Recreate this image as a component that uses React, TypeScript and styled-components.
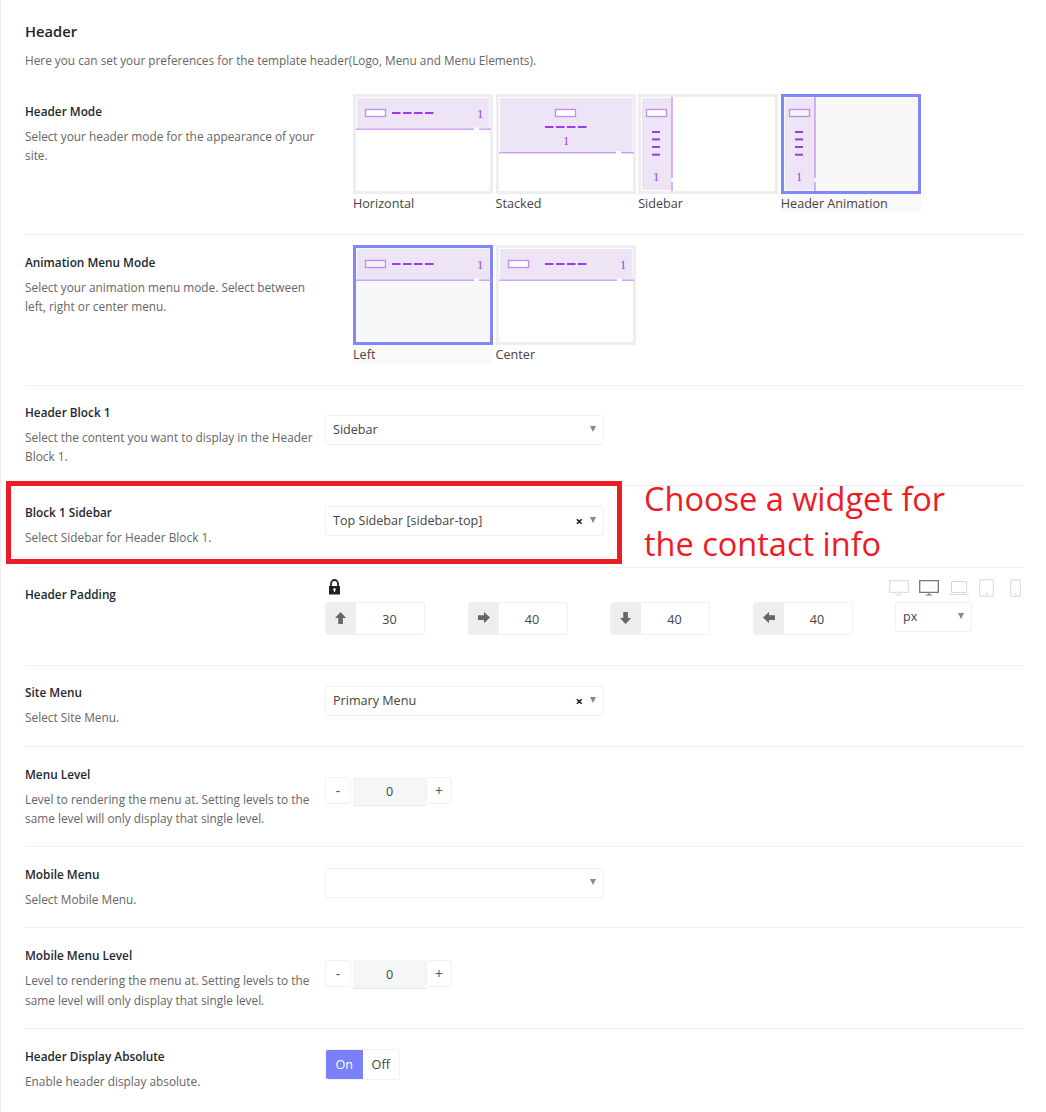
import React from 'react';
import styled, { createGlobalStyle } from 'styled-components';

const GlobalStyle = createGlobalStyle`
    html, body { margin: 0; padding: 0; background: #fff; }
    body { font-family: "Open Sans", "Noto Sans", "Liberation Sans", sans-serif; color: #23282d; }
`;

const Page = styled.div`
    position: relative;
    width: 1046px;
    height: 1112px;
    box-sizing: border-box;
    border-left: 1px solid #ebebeb;
    padding-left: 24px;
    overflow: hidden;
`;
const Intro = styled.div`
    height: 84px;
    box-sizing: border-box;
    padding-top: 22px;
`;
const Title = styled.h2`
    margin: 0;
    font-size: 14.7px;
    line-height: 18px;
    font-weight: 600;
    color: #1f2328;
`;
const Lead = styled.p`
    margin: 11px 0 0;
    font-size: 11.8px;
    line-height: 19px;
    color: #666;
`;
const Row = styled.div<{ $last?: boolean }>`
    width: 999px;
    display: grid;
    grid-template-columns: 300px 1fr;
    border-bottom: ${p => (p.$last ? 'none' : '1px solid #f0f0f0')};
`;
const Label = styled.div<{ $top?: number }>`
    padding: ${p => p.$top ?? 19}px 10px ${p => 38 - (p.$top ?? 19)}px 0;
`;
const Name = styled.div`
    font-size: 11.8px;
    line-height: 14px;
    font-weight: 600;
    color: #23282d;
    margin-bottom: 9px;
`;
const Desc = styled.div`
    font-size: 11.85px;
    line-height: 19.2px;
    color: #666;
`;
const Control = styled.div<{ $top: number; $left?: number }>`
    padding-top: ${p => p.$top}px;
    padding-left: ${p => p.$left ?? 0}px;
`;

const Thumbs = styled.div`
    display: flex;
    gap: 2.6px;
    padding-bottom: 21px;
`;
const ThumbItem = styled.div`
    width: 140px;
`;
const ThumbBox = styled.div<{ $active?: boolean }>`
    width: 140px;
    height: 100px;
    box-sizing: border-box;
    border: 3px solid ${p => (p.$active ? '#7f87fb' : '#eeeeee')};
    background: ${p => (p.$active ? '#f8f8f8' : '#fff')};
    svg { display: block; margin: -3px; }
`;
const ThumbName = styled.div<{ $active?: boolean }>`
    font-size: 12.6px;
    line-height: 19px;
    color: #444;
    background: ${p => (p.$active ? '#f9f9f9' : 'transparent')};
`;

const SelectBox = styled.div<{ $w?: number }>`
    position: relative;
    width: ${p => p.$w ?? 279}px;
    height: 30px;
    box-sizing: border-box;
    border: 1px solid #f1f1f1;
    border-radius: 3px;
    background: #fff;
    display: flex;
    align-items: center;
    padding: 0 7px 1px;
    font-size: 12.6px;
    color: #444;
`;
const Clear = styled.span`
    position: absolute;
    right: 20px;
    top: 50%;
    transform: translateY(-50%);
    font-size: 13px;
    font-weight: 700;
    color: #111;
`;
const Caret = styled.span`
    position: absolute;
    right: 7px;
    top: 10px;
    width: 0;
    height: 0;
    border-left: 3.5px solid transparent;
    border-right: 3.5px solid transparent;
    border-top: 6px solid #888;
`;

const PaddingTop = styled.div`
    display: flex;
    justify-content: space-between;
    align-items: flex-start;
    height: 23px;
    padding: 0 3px 0 3px;
`;
const Devices = styled.div`
    display: flex;
    align-items: center;
    gap: 10px;
    svg { display: block; }
    svg:last-child { margin-left: 6px; }
`;
const PaddingFields = styled.div`
    display: flex;
    align-items: flex-start;
    padding-bottom: 30px;
`;
const Dimension = styled.div`
    width: 100px;
    height: 33px;
    margin-right: 42.5px;
    box-sizing: border-box;
    display: flex;
    border: 1px solid #f1f1f1;
    border-radius: 3px;
    overflow: hidden;
`;
const Addon = styled.div`
    width: 30px;
    background: #eeeeee;
    display: flex;
    align-items: center;
    justify-content: center;
    padding-bottom: 1px;
    box-sizing: border-box;
`;
const DimensionValue = styled.div`
    flex: 1;
    text-align: center;
    font-size: 12.6px;
    line-height: 34px;
    color: #444;
    padding-right: 1px;
`;

const Stepper = styled.div`
    display: flex;
    align-items: flex-start;
`;
const StepButton = styled.div`
    width: 26px;
    height: 27px;
    box-sizing: border-box;
    border: 1px solid #f1f1f1;
    border-radius: 3px;
    display: flex;
    align-items: center;
    justify-content: center;
    font-size: 14px;
    color: #555;
`;
const StepValue = styled.div`
    width: 73px;
    height: 29px;
    margin-left: 2px;
    box-sizing: border-box;
    background: #f5f6f8;
    border-bottom: 1px solid #e4e6ea;
    text-align: center;
    font-size: 12.6px;
    line-height: 29px;
    color: #444;
`;

const Toggle = styled.div`
    display: flex;
    width: 75px;
    height: 31px;
    box-sizing: border-box;
    border: 1px solid #f3f3f3;
    border-radius: 3px;
    overflow: hidden;
`;
const ToggleOption = styled.div<{ $on?: boolean }>`
    flex: 1;
    display: flex;
    align-items: center;
    justify-content: center;
    font-size: 12.6px;
    background: ${p => (p.$on ? '#7a80f8' : '#fff')};
    color: ${p => (p.$on ? '#fff' : '#444')};
`;

const Highlight = styled.div`
    position: absolute;
    left: 5px;
    top: 481px;
    width: 616px;
    height: 83px;
    box-sizing: border-box;
    border: 5px solid #ed1c24;
`;
const Note = styled.div`
    position: absolute;
    left: 643px;
    top: 477px;
    font-size: 32.5px;
    line-height: 44.5px;
    color: #ed1c24;
    white-space: nowrap;
`;

type ThumbVariant = 'horizontal' | 'stacked' | 'sidebar' | 'center';

const PURPLE = '#9b3bec';
const LINE = '#c99ff2';
const LAVENDER = '#ede4f6';

const Dashes = ({ x, y }: { x: number; y: number }) => (
    <g fill={PURPLE}>
        {[0, 11, 22, 33].map(d => (
            <rect key={d} x={x + d} y={y - 1} width="8.5" height="2" />
        ))}
    </g>
);

const One = ({ x, y }: { x: number; y: number }) => (
    <text x={x} y={y} textAnchor="middle" fontSize="12.5" fontFamily="'Liberation Serif', serif" fill={PURPLE}>
        1
    </text>
);

const Logo = ({ x, fill }: { x: number; fill: string }) => (
    <rect x={x + 0.5} y="15.5" width="20" height="7" fill={fill} stroke="#bf8af2" strokeWidth="1.3" />
);

const ThumbArt = ({ variant, active }: { variant: ThumbVariant; active?: boolean }) => {
    const logoFill = active ? '#f3f3f3' : '#fff';
    if (variant === 'sidebar') {
        return (
            <svg width="140" height="100" viewBox="0 0 140 100">
                <path d="M7 4h26.5v92H7a3 3 0 0 1-3-3V7a3 3 0 0 1 3-3z" fill={LAVENDER} />
                <path d="M34 3v81M34 88v9" stroke="#b36df0" strokeWidth="1" fill="none" />
                <Logo x={8} fill={logoFill} />
                {[38, 45.4, 53, 60.7].map(y => (
                    <rect key={y} x="14" y={y - 1} width="8" height="2" fill={PURPLE} />
                ))}
                <One x={18} y={86.5} />
            </svg>
        );
    }
    const stacked = variant === 'stacked';
    const bottom = stacked ? 58 : 34.5;
    const gapX = stacked ? 120 : 121;
    return (
        <svg width="140" height="100" viewBox="0 0 140 100">
            <rect x="4" y="4" width="132.5" height={bottom - 4} fill={LAVENDER} />
            <rect x="3" y={bottom} width="135" height="1.4" fill={LINE} />
            <rect x={gapX} y={bottom - 1} width="5" height="3" fill="#fff" />
            {stacked ? (
                <>
                    <Logo x={59} fill={logoFill} />
                    <Dashes x={49} y={33} />
                    <One x={70} y={50.5} />
                </>
            ) : (
                <>
                    <Logo x={12} fill={logoFill} />
                    <Dashes x={variant === 'center' ? 49 : 39} y={19} />
                    <One x={127} y={23.5} />
                </>
            )}
        </svg>
    );
};

const Thumb = ({ name, variant, active }: { name: string; variant: ThumbVariant; active?: boolean }) => (
    <ThumbItem>
        <ThumbBox $active={active}>
            <ThumbArt variant={variant} active={active} />
        </ThumbBox>
        <ThumbName $active={active}>{name}</ThumbName>
    </ThumbItem>
);

const Select = ({ value, clearable }: { value?: string; clearable?: boolean }) => (
    <SelectBox>
        {value}
        {clearable && <Clear>×</Clear>}
        <Caret />
    </SelectBox>
);

const ARROWS: Record<string, string> = {
    up: 'M6.5 0 13 7H9.2v7H3.8V7H0z',
    right: 'M14 6.5 7 13V9.2H0V3.8h7V0z',
    down: 'M6.5 14 0 7h3.8V0h5.4v7H13z',
    left: 'M0 6.5 7 0v3.8h7v5.4H7V13z',
};

const Arrow = ({ dir }: { dir: string }) => (
    <svg width="12" height="12" viewBox="0 0 14 14">
        <path d={ARROWS[dir]} fill="#666" />
    </svg>
);

const LockIcon = () => (
    <svg width="13" height="16" viewBox="0 0 13 16">
        <path d="M3 7V4.5a3.5 3.5 0 0 1 7 0V7" fill="none" stroke="#222" strokeWidth="1.8" />
        <path d="M1 7h11v8.5H1z" fill="#222" />
        <circle cx="6.5" cy="10.5" r="1.3" fill="#fff" />
        <rect x="6" y="10.5" width="1" height="2.5" fill="#fff" />
    </svg>
);

const Desktop = ({ color, w }: { color: string; w: number }) => (
    <svg width={w} height="16" viewBox="0 0 20 16">
        <path d="M.7.7h18.6v11.6H.7z" fill="none" stroke={color} strokeWidth="1.3" />
        <path d="M7 15h6M10 12.5V15" fill="none" stroke={color} strokeWidth="1.2" />
    </svg>
);

const Laptop = ({ color }: { color: string }) => (
    <svg width="20" height="16" viewBox="0 0 20 16">
        <path d="M2.5 1.5h15v11h-15z" fill="none" stroke={color} strokeWidth="1" />
        <path d="M0 14.5h20" stroke={color} strokeWidth="1" />
    </svg>
);

const Tablet = ({ color, w }: { color: string; w: number }) => (
    <svg width={w} height="18" viewBox={`0 0 ${w} 18`}>
        <rect x=".6" y=".6" width={w - 1.2} height="16.8" rx="2" fill="none" stroke={color} strokeWidth="1.1" />
        <rect x={w / 2 - 1} y="14" width="2" height="2" fill={color} />
    </svg>
);

const App = () => (
    <Page>
        <GlobalStyle />
        <Intro>
            <Title>Header</Title>
            <Lead>Here you can set your preferences for the template header(Logo, Menu and Menu Elements).</Lead>
        </Intro>

        <Row>
            <Label $top={20}>
                <Name>Header Mode</Name>
                <Desc>Select your header mode for the appearance of your site.</Desc>
            </Label>
            <Control $top={10} $left={28}>
                <Thumbs>
                    <Thumb name="Horizontal" variant="horizontal" />
                    <Thumb name="Stacked" variant="stacked" />
                    <Thumb name="Sidebar" variant="sidebar" />
                    <Thumb name="Header Animation" variant="sidebar" active />
                </Thumbs>
            </Control>
        </Row>

        <Row>
            <Label $top={20}>
                <Name>Animation Menu Mode</Name>
                <Desc>Select your animation menu mode. Select between left, right or center menu.</Desc>
            </Label>
            <Control $top={10} $left={28}>
                <Thumbs>
                    <Thumb name="Left" variant="horizontal" active />
                    <Thumb name="Center" variant="center" />
                </Thumbs>
            </Control>
        </Row>

        <Row>
            <Label>
                <Name>Header Block 1</Name>
                <Desc>Select the content you want to display in the Header Block 1.</Desc>
            </Label>
            <Control $top={29}>
                <Select value="Sidebar" />
            </Control>
        </Row>

        <Row>
            <Label>
                <Name>Block 1 Sidebar</Name>
                <Desc>Select Sidebar for Header Block 1.</Desc>
            </Label>
            <Control $top={20}>
                <Select value="Top Sidebar [sidebar-top]" clearable />
            </Control>
        </Row>

        <Row>
            <Label>
                <Name>Header Padding</Name>
            </Label>
            <Control $top={11}>
                <PaddingTop>
                    <LockIcon />
                    <Devices>
                        <Desktop color="#dddddd" w={20} />
                        <Desktop color="#777777" w={20} />
                        <Laptop color="#d8d8d8" />
                        <Tablet color="#dddddd" w={15} />
                        <Tablet color="#dddddd" w={11} />
                    </Devices>
                </PaddingTop>
                <PaddingFields>
                    {[
                        ['up', '30'],
                        ['right', '40'],
                        ['down', '40'],
                        ['left', '40'],
                    ].map(([dir, value]) => (
                        <Dimension key={dir}>
                            <Addon>
                                <Arrow dir={dir} />
                            </Addon>
                            <DimensionValue>{value}</DimensionValue>
                        </Dimension>
                    ))}
                    <SelectBox $w={77}>
                        px
                        <Caret />
                    </SelectBox>
                </PaddingFields>
            </Control>
        </Row>

        <Row>
            <Label>
                <Name>Site Menu</Name>
                <Desc>Select Site Menu.</Desc>
            </Label>
            <Control $top={20}>
                <Select value="Primary Menu" clearable />
            </Control>
        </Row>

        <Row>
            <Label $top={20}>
                <Name>Menu Level</Name>
                <Desc>Level to rendering the menu at. Setting levels to the same level will only display that single level.</Desc>
            </Label>
            <Control $top={30}>
                <Stepper>
                    <StepButton>-</StepButton>
                    <StepValue>0</StepValue>
                    <StepButton>+</StepButton>
                </Stepper>
            </Control>
        </Row>

        <Row>
            <Label $top={20}>
                <Name>Mobile Menu</Name>
                <Desc>Select Mobile Menu.</Desc>
            </Label>
            <Control $top={21}>
                <Select />
            </Control>
        </Row>

        <Row>
            <Label $top={20}>
                <Name>Mobile Menu Level</Name>
                <Desc>Level to rendering the menu at. Setting levels to the same level will only display that single level.</Desc>
            </Label>
            <Control $top={32}>
                <Stepper>
                    <StepButton>-</StepButton>
                    <StepValue>0</StepValue>
                    <StepButton>+</StepButton>
                </Stepper>
            </Control>
        </Row>

        <Row $last>
            <Label $top={20}>
                <Name>Header Display Absolute</Name>
                <Desc>Enable header display absolute.</Desc>
            </Label>
            <Control $top={20}>
                <Toggle>
                    <ToggleOption $on>On</ToggleOption>
                    <ToggleOption>Off</ToggleOption>
                </Toggle>
            </Control>
        </Row>

        <Highlight />
        <Note>
            Choose a widget for
            <br />
            the contact info
        </Note>
    </Page>
);

export default App;
